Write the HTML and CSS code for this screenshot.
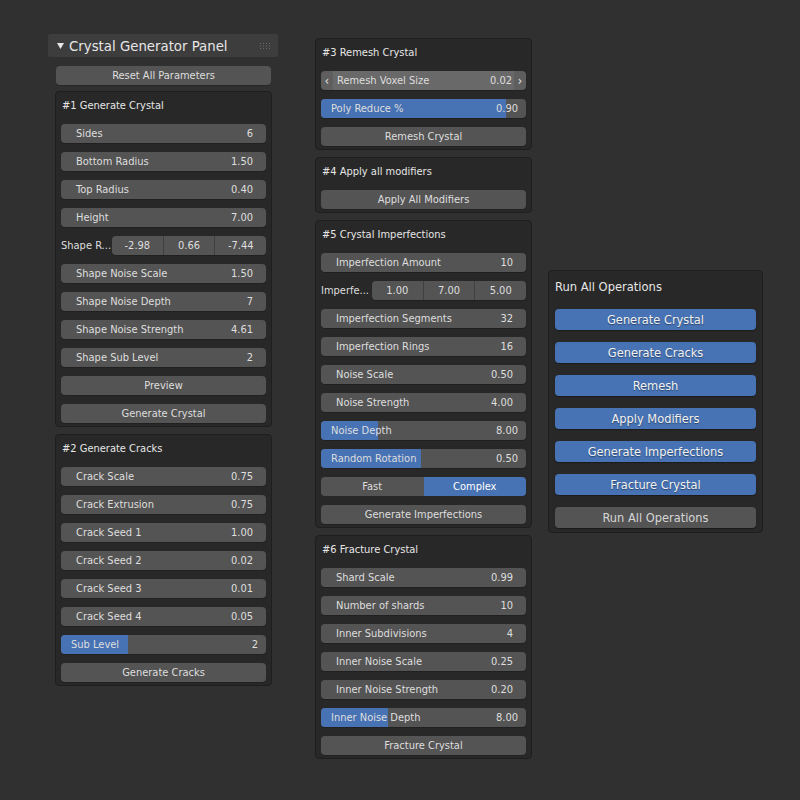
FILE: index.html
```html
<!DOCTYPE html>
<html>
<head>
<meta charset="utf-8">
<link rel="stylesheet" href="styles.css">
</head>
<body>
<div class="page">
  <div class="col col1">
    <div class="header">
      <svg class="tri" width="7" height="6" viewBox="0 0 7 6"><polygon points="0,0 7,0 3.5,6" fill="#e6e6e6"/></svg>
      <span class="header-title">Crystal Generator Panel</span>
      <svg class="grip" width="11" height="6" viewBox="0 0 11 6">
        <g fill="#6a6a6a">
          <rect x="0" y="0" width="1" height="1"/><rect x="3" y="0" width="1" height="1"/><rect x="6" y="0" width="1" height="1"/><rect x="9" y="0" width="1" height="1"/>
          <rect x="0" y="2.5" width="1" height="1"/><rect x="3" y="2.5" width="1" height="1"/><rect x="6" y="2.5" width="1" height="1"/><rect x="9" y="2.5" width="1" height="1"/>
          <rect x="0" y="5" width="1" height="1"/><rect x="3" y="5" width="1" height="1"/><rect x="6" y="5" width="1" height="1"/><rect x="9" y="5" width="1" height="1"/>
        </g>
      </svg>
    </div>
    <div class="w btn reset">Reset All Parameters</div>

    <div class="panel p1">
      <div class="ptitle">#1 Generate Crystal</div>
      <div class="rows">
        <div class="w num"><span>Sides</span><span>6</span></div>
        <div class="w num"><span>Bottom Radius</span><span>1.50</span></div>
        <div class="w num"><span>Top Radius</span><span>0.40</span></div>
        <div class="w num"><span>Height</span><span>7.00</span></div>
        <div class="vec"><span class="vlabel">Shape R...</span><div class="cells"><span>-2.98</span><span>0.66</span><span>-7.44</span></div></div>
        <div class="w num"><span>Shape Noise Scale</span><span>1.50</span></div>
        <div class="w num"><span>Shape Noise Depth</span><span>7</span></div>
        <div class="w num"><span>Shape Noise Strength</span><span>4.61</span></div>
        <div class="w num"><span>Shape Sub Level</span><span>2</span></div>
        <div class="w btn">Preview</div>
        <div class="w btn">Generate Crystal</div>
      </div>
    </div>

    <div class="panel p2">
      <div class="ptitle">#2 Generate Cracks</div>
      <div class="rows">
        <div class="w num"><span>Crack Scale</span><span>0.75</span></div>
        <div class="w num"><span>Crack Extrusion</span><span>0.75</span></div>
        <div class="w num"><span>Crack Seed 1</span><span>1.00</span></div>
        <div class="w num"><span>Crack Seed 2</span><span>0.02</span></div>
        <div class="w num"><span>Crack Seed 3</span><span>0.01</span></div>
        <div class="w num"><span>Crack Seed 4</span><span>0.05</span></div>
        <div class="w slider"><div class="fill" style="width:32.5%"></div><span>Sub Level</span><span>2</span></div>
        <div class="w btn">Generate Cracks</div>
      </div>
    </div>
  </div>

  <div class="col col2">
    <div class="panel">
      <div class="ptitle">#3 Remesh Crystal</div>
      <div class="rows">
        <div class="w hover"><span class="arr">&lsaquo;</span><div class="mid"><span>Remesh Voxel Size</span><span>0.02</span></div><span class="arr">&rsaquo;</span></div>
        <div class="w slider"><div class="fill" style="width:90%"></div><span>Poly Reduce %</span><span>0.90</span></div>
        <div class="w btn">Remesh Crystal</div>
      </div>
    </div>
    <div class="panel">
      <div class="ptitle">#4 Apply all modifiers</div>
      <div class="rows">
        <div class="w btn">Apply All Modifiers</div>
      </div>
    </div>
    <div class="panel">
      <div class="ptitle">#5 Crystal Imperfections</div>
      <div class="rows">
        <div class="w num"><span>Imperfection Amount</span><span>10</span></div>
        <div class="vec"><span class="vlabel">Imperfe...</span><div class="cells"><span>1.00</span><span>7.00</span><span>5.00</span></div></div>
        <div class="w num"><span>Imperfection Segments</span><span>32</span></div>
        <div class="w num"><span>Imperfection Rings</span><span>16</span></div>
        <div class="w num"><span>Noise Scale</span><span>0.50</span></div>
        <div class="w num"><span>Noise Strength</span><span>4.00</span></div>
        <div class="w slider"><div class="fill" style="width:27.7%"></div><span>Noise Depth</span><span>8.00</span></div>
        <div class="w slider"><div class="fill" style="width:49%"></div><span>Random Rotation</span><span>0.50</span></div>
        <div class="seg"><span class="opt">Fast</span><span class="opt on">Complex</span></div>
        <div class="w btn">Generate Imperfections</div>
      </div>
    </div>
    <div class="panel">
      <div class="ptitle">#6 Fracture Crystal</div>
      <div class="rows">
        <div class="w num"><span>Shard Scale</span><span>0.99</span></div>
        <div class="w num"><span>Number of shards</span><span>10</span></div>
        <div class="w num"><span>Inner Subdivisions</span><span>4</span></div>
        <div class="w num"><span>Inner Noise Scale</span><span>0.25</span></div>
        <div class="w num"><span>Inner Noise Strength</span><span>0.20</span></div>
        <div class="w slider"><div class="fill" style="width:32.7%"></div><span>Inner Noise Depth</span><span>8.00</span></div>
        <div class="w btn">Fracture Crystal</div>
      </div>
    </div>
  </div>

  <div class="col col3">
    <div class="panel runall">
      <div class="rtitle">Run All Operations</div>
      <div class="rbtns">
        <div class="rb blue">Generate Crystal</div>
        <div class="rb blue">Generate Cracks</div>
        <div class="rb blue">Remesh</div>
        <div class="rb blue">Apply Modifiers</div>
        <div class="rb blue">Generate Imperfections</div>
        <div class="rb blue">Fracture Crystal</div>
        <div class="rb grey">Run All Operations</div>
      </div>
    </div>
  </div>
</div>
</body>
</html>
```
FILE: styles.css
```css
html, body {
  margin: 0;
  padding: 0;
}
body {
  width: 800px;
  height: 800px;
  background: #303030;
  font-family: "DejaVu Sans", "Liberation Sans", sans-serif;
  font-stretch: condensed;
  font-size: 11px;
  color: #dedede;
  overflow: hidden;
}
.page {
  display: flex;
  align-items: flex-start;
  padding-left: 48px;
}
.col1 {
  width: 230px;
  margin-top: 34px;
}
.col2 {
  width: 217px;
  margin-left: 37px;
  margin-top: 38px;
  display: flex;
  flex-direction: column;
  gap: 7px;
}
.col3 {
  width: 215px;
  margin-left: 16px;
  margin-top: 270px;
}
.header {
  height: 23px;
  background: #3d3d3d;
  display: flex;
  align-items: center;
  padding-left: 9px;
  padding-right: 7px;
  border-radius: 2px;
}
.tri {
  margin-right: 5px;
  margin-top: 1px;
}
.header-title {
  font-size: 14.8px;
  color: #e6e6e6;
  flex: 1;
}
.grip {
  display: block;
}
.reset {
  margin: 9px 7px 0 8px;
}
.panel {
  background: #282828;
  border: 1px solid #1e1e1e;
  border-radius: 4px;
  padding: 4px 5px 3px 5px;
}
.col1 .panel {
  margin: 6px 6px 0 7px;
}
.col1 .p2 {
  margin-top: 7px;
}
.ptitle {
  height: 20px;
  line-height: 20px;
  color: #e6e6e6;
  padding-left: 1px;
}
.rows {
  margin-top: 8px;
  display: flex;
  flex-direction: column;
  gap: 9px;
}
.w {
  height: 19px;
  background: #545454;
  border-radius: 4px;
  box-shadow: 0 1px 0 rgba(0,0,0,0.18);
  position: relative;
  overflow: hidden;
  display: flex;
  align-items: center;
  justify-content: space-between;
  box-sizing: border-box;
  white-space: nowrap;
}
.num {
  padding: 0 13px 0 15px;
}
.btn {
  justify-content: center;
}
.slider {
  padding: 0 8px 0 10px;
}
.slider .fill {
  position: absolute;
  left: 0;
  top: 0;
  bottom: 0;
  background: #4772b3;
}
.slider span {
  position: relative;
}
.hover {
  background: #5e5e5e;
  padding: 0;
}
.hover .arr {
  width: 12px;
  text-align: center;
  font-size: 12px;
  color: #e6e6e6;
}
.hover .mid {
  flex: 1;
  align-self: stretch;
  background: #696969;
  display: flex;
  align-items: center;
  justify-content: space-between;
  padding: 0 2px 0 4px;
}
.vec {
  height: 19px;
  display: flex;
  align-items: center;
}
.vlabel {
  width: 51px;
  white-space: nowrap;
}
.cells {
  flex: 1;
  display: flex;
  height: 19px;
  border-radius: 4px;
  overflow: hidden;
  box-shadow: 0 1px 0 rgba(0,0,0,0.18);
}
.cells span {
  flex: 1;
  background: #545454;
  display: flex;
  align-items: center;
  justify-content: center;
  border-left: 1px solid #404040;
}
.cells span:first-child {
  border-left: none;
}
.seg {
  height: 19px;
  display: flex;
  border-radius: 4px;
  overflow: hidden;
}
.opt {
  flex: 1;
  background: #545454;
  display: flex;
  align-items: center;
  justify-content: center;
}
.opt.on {
  background: #4772b3;
  color: #ffffff;
}
.runall {
  padding: 6px 6px 4px 6px;
}
.rtitle {
  height: 20px;
  line-height: 20px;
  font-size: 12.8px;
  color: #e6e6e6;
}
.rbtns {
  margin-top: 12px;
  display: flex;
  flex-direction: column;
  gap: 12px;
}
.rb {
  height: 21px;
  border-radius: 4px;
  display: flex;
  align-items: center;
  justify-content: center;
  font-size: 12.7px;
  box-shadow: 0 1px 1px rgba(0,0,0,0.35);
}
.rb.blue {
  background: #4772b3;
  color: #f2f2f2;
  text-shadow: 0 1px 1px rgba(0,0,0,0.4);
}
.rb.grey {
  background: #545454;
  color: #d6d6d6;
}
```
